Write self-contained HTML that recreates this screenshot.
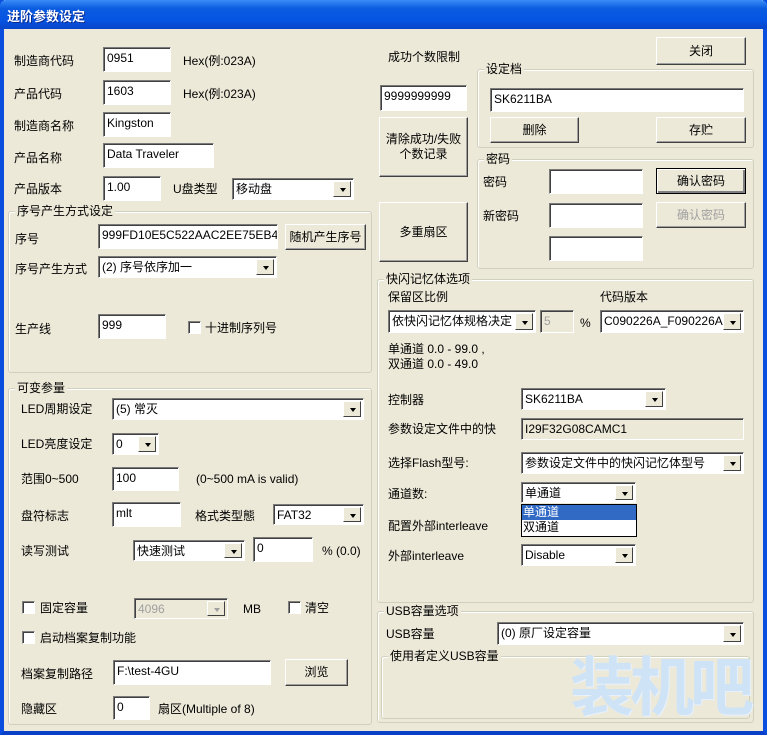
<!DOCTYPE html>
<html><head><meta charset="utf-8">
<style>
*{box-sizing:border-box;margin:0;padding:0}
body{width:767px;height:735px;overflow:hidden;background:#0831d9;font-family:"Liberation Sans","Noto Sans CJK SC",sans-serif;font-size:12px;color:#000;position:relative}
#win{position:absolute;left:0;top:0;width:767px;height:735px;background:#ece9d8;border-left:4px solid #0a4ee0;border-right:4px solid #0a4ee0;border-bottom:4px solid #0a3fc8}
#title{position:absolute;left:0;top:0;width:767px;height:29px;background:linear-gradient(#3a8cf6,#0a5ce0 30%,#0554e3 70%,#0845c8);border-radius:6px 6px 0 0;color:#fff;font-weight:bold;font-size:13px;padding:6px 0 0 7px;text-shadow:1px 1px #0a2a90}
.t{position:absolute;white-space:nowrap;line-height:14px}
.e{position:absolute;background:#fff;border:1px solid;border-color:#7a7a7a #fff #fff #7a7a7a;box-shadow:inset 1px 1px #404040;padding:3px 0 0 3px;white-space:nowrap;overflow:hidden;line-height:14px}
.b{position:absolute;background:#ece9d8;border:1px solid;border-color:#fff #404040 #404040 #fff;box-shadow:inset -1px -1px #a0a0a0;text-align:center;display:flex;align-items:center;justify-content:center;line-height:15px}
.c{position:absolute;background:#fff;border:1px solid;border-color:#7a7a7a #fff #fff #7a7a7a;box-shadow:inset 1px 1px #404040;padding:3px 0 0 3px;white-space:nowrap;overflow:hidden;line-height:14px}
.c::after{content:"";position:absolute;right:2px;top:2px;bottom:2px;width:16px;background:#ece9d8;border:1px solid;border-color:#fff #404040 #404040 #fff}
.c i{position:absolute;right:7px;top:50%;margin-top:-1px;width:0;height:0;border-left:3.5px solid transparent;border-right:3.5px solid transparent;border-top:4px solid #000;z-index:2}
.g{position:absolute;border:1px solid #d0d0bf;border-radius:3px;box-shadow:1px 1px #fff inset}
.g>span{position:absolute;left:6px;top:-8px;background:#ece9d8;padding:0 2px;line-height:14px}
.k{position:absolute;width:13px;height:13px;background:#fff;border:1px solid;border-color:#808080 #fff #fff #808080;box-shadow:inset 1px 1px #404040}
</style></head><body>
<div id="win"></div>
<div id="title">进阶参数设定</div>

<div class="t" style="left:14px;top:54px">制造商代码</div>
<div class="e" style="left:103px;top:47px;width:68px;height:25px">0951</div>
<div class="t" style="left:183px;top:54px">Hex(例:023A)</div>
<div class="t" style="left:14px;top:87px">产品代码</div>
<div class="e" style="left:103px;top:80px;width:68px;height:25px">1603</div>
<div class="t" style="left:183px;top:87px">Hex(例:023A)</div>
<div class="t" style="left:14px;top:119px">制造商名称</div>
<div class="e" style="left:103px;top:112px;width:68px;height:25px">Kingston</div>
<div class="t" style="left:14px;top:151px">产品名称</div>
<div class="e" style="left:103px;top:143px;width:111px;height:25px">Data Traveler</div>
<div class="t" style="left:14px;top:182px">产品版本</div>
<div class="e" style="left:103px;top:176px;width:58px;height:25px">1.00</div>
<div class="t" style="left:173px;top:182px">U盘类型</div>
<div class="c" style="left:232px;top:178px;width:122px;height:22px">移动盘<i></i></div>

<div class="g" style="left:8px;top:211px;width:364px;height:162px"><span>序号产生方式设定</span></div>
<div class="t" style="left:15px;top:232px">序号</div>
<div class="e" style="left:98px;top:224px;width:180px;height:25px">999FD10E5C522AAC2EE75EB4</div>
<div class="b" style="left:285px;top:224px;width:81px;height:26px">随机产生序号</div>
<div class="t" style="left:15px;top:262px">序号产生方式</div>
<div class="c" style="left:98px;top:256px;width:179px;height:22px">(2) 序号依序加一<i></i></div>
<div class="t" style="left:15px;top:322px">生产线</div>
<div class="e" style="left:98px;top:314px;width:68px;height:25px">999</div>
<div class="k" style="left:188px;top:321px"></div>
<div class="t" style="left:205px;top:321px">十进制序列号</div>

<div class="g" style="left:8px;top:388px;width:364px;height:337px"><span>可变参量</span></div>
<div class="t" style="left:21px;top:402px">LED周期设定</div>
<div class="c" style="left:112px;top:398px;width:252px;height:22px">(5) 常灭<i></i></div>
<div class="t" style="left:21px;top:437px">LED亮度设定</div>
<div class="c" style="left:112px;top:433px;width:47px;height:22px">0<i></i></div>
<div class="t" style="left:21px;top:472px">范围0~500</div>
<div class="e" style="left:112px;top:467px;width:67px;height:24px">100</div>
<div class="t" style="left:196px;top:472px">(0~500 mA is valid)</div>
<div class="t" style="left:21px;top:509px">盘符标志</div>
<div class="e" style="left:112px;top:502px;width:69px;height:25px">mlt</div>
<div class="t" style="left:195px;top:509px">格式类型態</div>
<div class="c" style="left:273px;top:504px;width:91px;height:21px">FAT32<i></i></div>
<div class="t" style="left:21px;top:544px">读写测试</div>
<div class="c" style="left:133px;top:540px;width:112px;height:21px">快速测试<i></i></div>
<div class="e" style="left:253px;top:537px;width:60px;height:25px">0</div>
<div class="t" style="left:322px;top:544px">% (0.0)</div>
<div class="k" style="left:22px;top:601px"></div>
<div class="t" style="left:40px;top:601px">固定容量</div>
<div class="c" style="left:134px;top:598px;width:94px;height:21px;background:#ece9d8;color:#a0a0a0">4096<i style="border-top-color:#a0a0a0"></i></div>
<div class="t" style="left:243px;top:602px">MB</div>
<div class="k" style="left:288px;top:601px"></div>
<div class="t" style="left:305px;top:601px">清空</div>
<div class="k" style="left:22px;top:631px"></div>
<div class="t" style="left:40px;top:631px">启动档案复制功能</div>
<div class="t" style="left:21px;top:667px">档案复制路径</div>
<div class="e" style="left:113px;top:660px;width:158px;height:25px">F:\test-4GU</div>
<div class="b" style="left:285px;top:659px;width:63px;height:27px">浏览</div>
<div class="t" style="left:21px;top:702px">隐藏区</div>
<div class="e" style="left:113px;top:696px;width:37px;height:24px">0</div>
<div class="t" style="left:158px;top:702px">扇区(Multiple of 8)</div>

<div class="t" style="left:388px;top:50px">成功个数限制</div>
<div class="e" style="left:380px;top:85px;width:87px;height:26px">9999999999</div>
<div class="b" style="left:379px;top:117px;width:89px;height:60px">清除成功/失败<br>个数记录</div>
<div class="b" style="left:379px;top:202px;width:89px;height:60px">多重扇区</div>

<div class="b" style="left:656px;top:37px;width:90px;height:28px">关闭</div>
<div class="g" style="left:477px;top:69px;width:277px;height:79px"><span>设定档</span></div>
<div class="e" style="left:490px;top:88px;width:254px;height:24px">SK6211BA</div>
<div class="b" style="left:490px;top:117px;width:89px;height:26px">删除</div>
<div class="b" style="left:656px;top:117px;width:90px;height:26px">存贮</div>
<div class="g" style="left:477px;top:159px;width:277px;height:110px"><span>密码</span></div>
<div class="t" style="left:483px;top:175px">密码</div>
<div class="e" style="left:549px;top:169px;width:94px;height:25px"></div>
<div class="b" style="left:656px;top:168px;width:90px;height:26px;border:1px solid #000;box-shadow:inset 1px 1px #fff,inset -2px -2px #808080">确认密码</div>
<div class="t" style="left:483px;top:209px">新密码</div>
<div class="e" style="left:549px;top:203px;width:94px;height:25px"></div>
<div class="b" style="left:656px;top:202px;width:90px;height:26px;color:#a0a0a0">确认密码</div>
<div class="e" style="left:549px;top:236px;width:94px;height:25px"></div>

<div class="g" style="left:377px;top:279px;width:377px;height:324px"><span>快闪记忆体选项</span></div>
<div class="t" style="left:388px;top:290px">保留区比例</div>
<div class="t" style="left:600px;top:290px">代码版本</div>
<div class="c" style="left:388px;top:310px;width:148px;height:23px">依快闪记忆体规格决定<i></i></div>
<div class="e" style="left:540px;top:310px;width:34px;height:23px;background:#ece9d8;color:#a0a0a0">5</div>
<div class="t" style="left:580px;top:316px">%</div>
<div class="c" style="left:600px;top:310px;width:144px;height:23px">C090226A_F090226A<i></i></div>
<div class="t" style="left:388px;top:342px">单通道 0.0 - 99.0 ,</div>
<div class="t" style="left:388px;top:357px">双通道 0.0 - 49.0</div>
<div class="t" style="left:388px;top:393px">控制器</div>
<div class="c" style="left:521px;top:388px;width:145px;height:22px">SK6211BA<i></i></div>
<div class="t" style="left:388px;top:422px">参数设定文件中的快</div>
<div class="e" style="left:521px;top:418px;width:223px;height:22px;background:#ece9d8">I29F32G08CAMC1</div>
<div class="t" style="left:388px;top:456px">选择Flash型号:</div>
<div class="c" style="left:521px;top:452px;width:223px;height:22px">参数设定文件中的快闪记忆体型号<i></i></div>
<div class="t" style="left:388px;top:487px">通道数:</div>
<div class="c" style="left:521px;top:482px;width:115px;height:21px">单通道<i></i></div>
<div style="position:absolute;left:521px;top:504px;width:116px;height:33px;background:#fff;border:1px solid #000">
<div style="background:#316ac5;color:#fff;height:15px;line-height:14px;padding-left:1px">单通道</div>
<div style="height:15px;line-height:14px;padding-left:1px">双通道</div></div>
<div class="t" style="left:388px;top:519px">配置外部interleave</div>
<div class="t" style="left:388px;top:549px">外部interleave</div>
<div class="c" style="left:521px;top:544px;width:115px;height:22px">Disable<i></i></div>

<div class="g" style="left:377px;top:611px;width:377px;height:112px"><span>USB容量选项</span></div>
<div class="t" style="left:386px;top:627px">USB容量</div>
<div class="c" style="left:497px;top:622px;width:247px;height:23px">(0) 原厂设定容量<i></i></div>
<div class="g" style="left:381px;top:656px;width:369px;height:63px"><span>使用者定义USB容量</span></div>
<div class="t" style="left:570px;top:648px;font-size:64px;line-height:80px;font-weight:bold;color:#cfe3f7;letter-spacing:-4px;text-shadow:1px 1px #e8f1fb">装机吧</div>
</body></html>
